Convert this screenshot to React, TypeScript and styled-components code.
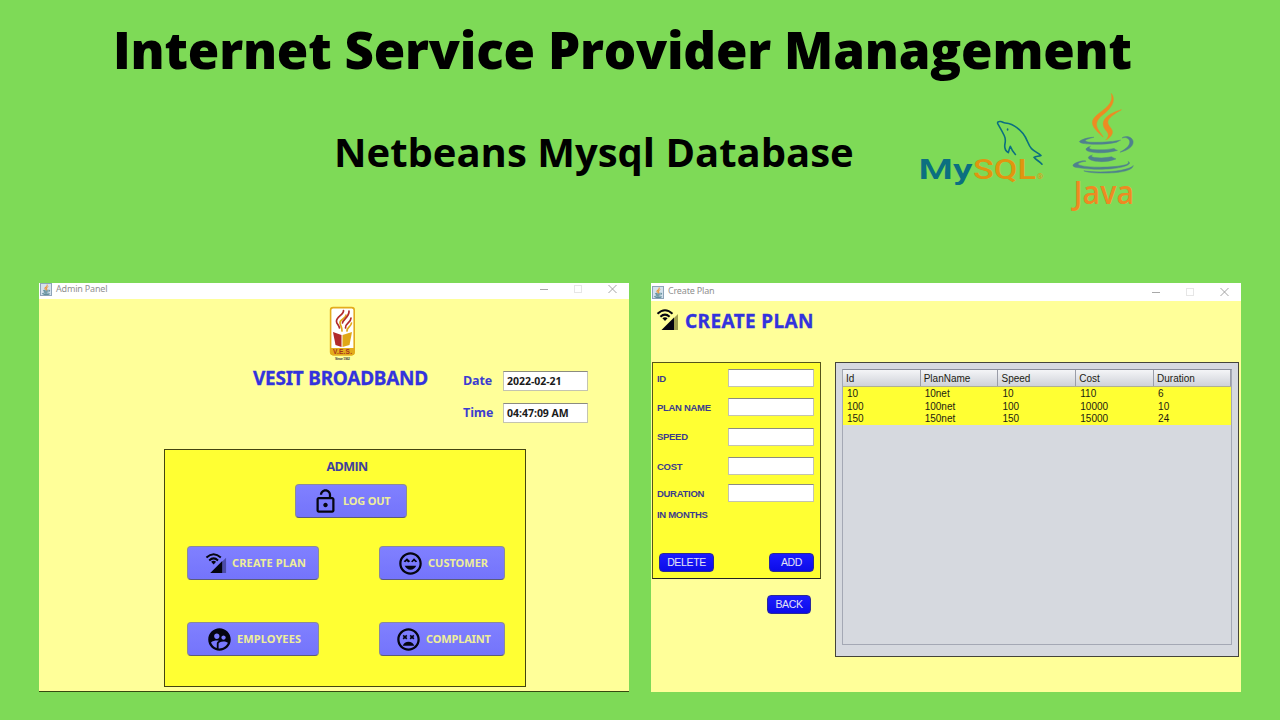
import React from "react";
import styled, { createGlobalStyle } from "styled-components";
import { MdOutlineLockOpen, MdSupervisedUserCircle } from "react-icons/md";

const GlobalStyle = createGlobalStyle`
  * { box-sizing: border-box; }
  body { margin: 0; background: #7eda57; overflow: hidden; }
`;

const Slide = styled.main`
  width: 1280px;
  height: 720px;
  background: #7eda57;
  display: flex;
  flex-direction: column;
`;

const Heading = styled.h1`
  margin: 0;
  padding: 13px 0 0 113px;
  height: 88px;
  font: 800 51px/72px "Open Sans", sans-serif;
  letter-spacing: -0.19px;
  color: #000;
  white-space: nowrap;
`;

const SubRow = styled.div`
  display: flex;
  align-items: flex-start;
  height: 195px;
  padding-left: 334px;
`;

const SubHeading = styled.h2`
  margin: 36px 0 0;
  width: 580px;
  font: 700 40px/56px "Open Sans", sans-serif;
  letter-spacing: 0;
  white-space: nowrap;
`;

const MysqlArt = styled.svg`
  width: 136px;
  height: 80px;
  margin-top: 27px;
`;

const JavaArt = styled.svg`
  width: 80px;
  height: 130px;
  margin: 2px 0 0 18px;
`;

const Windows = styled.div`
  display: flex;
  gap: 22px;
  padding-left: 39px;
`;

const Frame = styled.section<{ $base?: boolean }>`
  width: 590px;
  height: 409px;
  background: #ffff99;
  border-bottom: ${(p) => (p.$base ? "1px solid #35480f" : "0")};
  display: flex;
  flex-direction: column;
`;

const TitleBar = styled.header<{ $h: number; $pull: number }>`
  height: ${(p) => p.$h}px;
  flex: none;
  background: #fff;
  display: flex;
  align-items: center;
  padding: 0 ${(p) => p.$pull}px 0 1px;
  gap: 4px;
`;

const TitleText = styled.span<{ $dy: number }>`
  flex: 1;
  font: 400 9px/12px "Noto Sans", sans-serif;
  letter-spacing: -0.18px;
  color: #8f8f8f;
  margin-top: ${(p) => p.$dy}px;
`;

const Badge = styled.svg<{ $dy: number }>`
  width: 12px;
  height: 13px;
  margin-top: ${(p) => p.$dy}px;
`;

const Controls = styled.svg<{ $dy: number }>`
  width: 78px;
  height: 12px;
  margin-top: ${(p) => p.$dy}px;
`;

const AdminTop = styled.div`
  display: grid;
  grid-template-columns: 214px 210px 165px;
  height: 150px;
`;

const Brand = styled.div`
  grid-column: 2;
  display: flex;
  flex-direction: column;
  gap: 4px;
  padding-top: 7px;
`;

const VesArt = styled.svg`
  width: 27px;
  height: 55px;
  margin-left: 76px;
`;

const BlueTitle = styled.h3<{ $ls: number }>`
  margin: 0;
  font: 700 19px/26px "Noto Sans", sans-serif;
  letter-spacing: ${(p) => p.$ls}px;
  color: #3333dd;
  -webkit-text-stroke: 0.3px #3333dd;
  white-space: nowrap;
`;

const Clock = styled.div`
  display: grid;
  grid-template-columns: 40px 85px;
  grid-auto-rows: 20px;
  row-gap: 11.5px;
  padding-top: 72px;
`;

const ClockLabel = styled.span<{ $ls: number }>`
  font: 700 12.5px/19px "Open Sans", sans-serif;
  letter-spacing: ${(p) => p.$ls}px;
  color: #3c3cd0;
`;

const Field = styled.div<{ $h: number }>`
  height: ${(p) => p.$h}px;
  background: #fff;
  border: 1px solid #c4c4b0;
  border-top-color: #8b8b80;
`;

const ClockValue = styled(Field)`
  padding-left: 3px;
  font: 700 10.5px/19px "Open Sans", sans-serif;
  letter-spacing: -0.02px;
  color: #1a1a1a;
  white-space: nowrap;
`;

const AdminPanel = styled.div`
  width: 362px;
  height: 238px;
  margin-left: 125px;
  border: 1px solid #444410;
  background: #ffff33;
  padding: 8px 0 0;
`;

const PanelName = styled.div`
  text-align: center;
  margin-left: 4px;
  font: 700 12.5px/18px "Open Sans", sans-serif;
  letter-spacing: -0.6px;
  color: #40409c;
`;

const ButtonRow = styled.div<{ $top: number; $left: number }>`
  display: flex;
  gap: 60px;
  margin: ${(p) => p.$top}px 0 0 ${(p) => p.$left}px;
`;

const MenuButton = styled.button<{ $w: number; $pad: number }>`
  width: ${(p) => p.$w}px;
  height: 34px;
  padding: 0 0 0 ${(p) => p.$pad}px;
  display: flex;
  align-items: center;
  gap: 4px;
  border: 1px solid #8a8a9a;
  border-bottom-color: #5c5c78;
  border-radius: 4px;
  background: linear-gradient(#8080ff, #7474fb);
  font: 700 11px/16px "Noto Sans", sans-serif;
  color: #eeee99;
  white-space: nowrap;
  svg { color: #050510; flex: none; }
`;

const Caption = styled.span<{ $ls: number }>`
  letter-spacing: ${(p) => p.$ls}px;
`;

const PlanHead = styled.div`
  display: flex;
  align-items: flex-start;
  height: 61px;
  padding: 7px 0 0 5px;
  gap: 5px;
`;

const PlanBody = styled.div`
  display: grid;
  grid-template-columns: 169px 404px;
  column-gap: 14px;
  padding-left: 1px;
`;

const FormPanel = styled.div`
  height: 217px;
  border: 1px solid #55551a;
  border-bottom-color: #222;
  background: #ffff33;
  padding: 6px 6px 0 4px;
`;

const FormRow = styled.div<{ $gap: number }>`
  display: grid;
  grid-template-columns: 71px 86px;
  align-items: center;
  height: 18px;
  margin-bottom: ${(p) => p.$gap}px;
`;

const FormLabel = styled.label`
  font: 700 9.5px/13px "Liberation Sans", sans-serif;
  letter-spacing: -0.3px;
  color: #3c3c8c;
  white-space: nowrap;
`;

const Actions = styled.div`
  display: flex;
  justify-content: space-between;
  padding: 30px 0 0 2px;
`;

const SmallButton = styled.button<{ $w: number }>`
  width: ${(p) => p.$w}px;
  height: 19px;
  padding: 0;
  border: 1px solid #2a2a9a;
  border-radius: 4px;
  background: linear-gradient(#1c1cff, #0c0ce8);
  font: 400 10.5px/17px "Liberation Sans", sans-serif;
  letter-spacing: -0.35px;
  color: #e4e4f4;
`;

const BackRow = styled.div`
  display: flex;
  justify-content: flex-end;
  padding: 16px 10px 0 0;
`;

const TablePanel = styled.div`
  height: 295px;
  border: 1px solid #44443a;
  background: #d6d9df;
  padding: 6px;
`;

const TableBox = styled.div`
  height: 276px;
  width: 390px;
  border: 1px solid #a4a8b4;
  border-top-color: #888c98;
`;

const TableRow = styled.div<{ $head?: boolean }>`
  display: grid;
  grid-template-columns: 77.700px 77.800px 77.800px 77.800px 76.900px;
  height: ${(p) => (p.$head ? 17 : 12.5)}px;
  font: 400 10px/${(p) => (p.$head ? 18 : 14)}px "Liberation Sans", sans-serif;
  color: #1c1c12;
  background: ${(p) => (p.$head ? "linear-gradient(#f4f5f7, #cfd2d9)" : "#ffff33")};
  border-bottom: ${(p) => (p.$head ? "1px solid #b0b090" : "0")};
`;

const Cell = styled.span<{ $head?: boolean }>`
  height: ${(p) => (p.$head ? "16px" : "auto")};
  padding-left: ${(p) => (p.$head ? 3 : 4)}px;
  border-right: 1px solid ${(p) => (p.$head ? "#9a9da8" : "transparent")};
`;

const CUP_BLUE = [
  "M277.74 312.9c9.8-6.7 23.4-12.5 23.4-12.5s-38.7 7-77.2 10.2c-47.1 3.9-97.7 4.7-123.1 1.3-60.1-8 33-30.1 33-30.1s-36.1-2.4-80.6 19c-52.5 25.4 130 37 224.5 12.1z",
  "M300.9 375.1a12.19 12.19 0 0 1-2 2.6c128.3-33.7 81.1-118.9 19.8-97.3a17.33 17.33 0 0 0-8.2 6.3 70.45 70.45 0 0 1 11-3c31-6.5 75.5 41.5-20.6 91.4z",
  "M348 437.4s14.5 11.9-15.9 21.2c-57.9 17.5-240.8 22.8-291.6.7-18.3-7.9 16-19 26.8-21.3 11.2-2.4 17.7-2 17.7-2-20.3-14.3-131.3 28.1-56.4 40.2C232.84 509.4 401 461.3 348 437.4z",
  "M124.44 396c-78.7 22 47.9 67.4 148.1 24.5a185.89 185.89 0 0 1-28.2-13.8c-44.7 8.5-65.4 9.1-106 4.5-33.5-3.8-13.9-15.2-13.9-15.2z",
  "M304.24 493.2c-78.7 14.8-175.8 13.1-233.3 3.6 0-.1 11.8 9.7 72.4 13.6 92.2 5.9 233.8-3.3 237.1-46.9 0 0-6.4 16.5-76.2 29.7z",
  "M260.64 353c-59.2 11.4-93.5 11.1-136.8 6.6-33.5-3.5-11.6-19.7-11.6-19.7-86.8 28.8 48.2 61.4 169.5 25.9a60.37 60.37 0 0 1-21.1-12.8z",
];
const STEAM = [
  "M192.34 280.8c-19-42.7-83.1-80.2 0-145.8C296 53.2 242.84 0 242.84 0c21.5 84.5-75.6 110.1-110.7 162.6-23.9 35.9 11.7 74.4 60.2 118.2z",
  "M306.94 104.6c.1 0-175.2 43.8-91.5 140.2 24.7 28.4-6.5 54-6.5 54s62.7-32.4 33.9-72.9c-26.9-37.8-47.5-56.6 64.1-121.3z",
];

function Cup({ bold = 0 }: { bold?: number }) {
  return (
    <>
      {CUP_BLUE.map((d) => <path key={d} d={d} fill="#4f818d" stroke="#4f818d" strokeWidth={bold} />)}
      {STEAM.map((d) => <path key={d} d={d} fill="#ee8a22" stroke="#ee8a22" strokeWidth={bold} />)}
    </>
  );
}

function JavaLogo() {
  return (
    <JavaArt viewBox="1068 90 80 130">
      <g transform="translate(1072.5 93.5) scale(.1595 .1555)"><Cup bold={3} /></g>
      <text x="1073.500" y="203.800" fontFamily="Open Sans, sans-serif" fontWeight="600" fontSize="32" fill="#ee8a22" textLength="60.500" lengthAdjust="spacingAndGlyphs">Java</text>
    </JavaArt>
  );
}

function MysqlLogo() {
  return (
    <MysqlArt viewBox="914 115 136 80">
      <path
        fill="none"
        stroke="#0b6f80"
        strokeWidth="1.600"
        strokeLinejoin="round"
        strokeLinecap="round"
        d="M1015.400 154.500C1013.500 152.500 1011.500 149.500 1010.300 146.300C1009.300 148 1009.100 150.500 1008.300 152.600C1005.500 151 1004.200 147.500 1005 143.500C1005.600 140.500 1005.700 138.500 1004.200 135.500C1002.200 131.500 1000.200 128 998 124.200C996.800 122 998.600 121.200 1000.600 121.500C1002.600 121.800 1003.400 123 1005.300 123C1012 123.600 1018.500 128 1023 133.500C1027.500 139 1028 145 1031.500 148.600C1034.500 151.800 1038.500 152.800 1041 155.500C1038.500 156.500 1036 156 1034 157.300C1036 160 1039.500 161.300 1042 164.200"
      />
      <ellipse cx="1007.600" cy="129.500" rx=".8" ry="1.200" fill="#0b6f80" />
      <g fontFamily="Roboto, sans-serif" fontSize="27">
        <text x="918.500" y="178.800" fontWeight="600" fill="#0b6f80" textLength="54" lengthAdjust="spacingAndGlyphs">My</text>
        <text x="973" y="178.800" fontWeight="500" fill="#e0950f" textLength="63" lengthAdjust="spacingAndGlyphs">SQL</text>
        <text x="1037" y="178.800" fontSize="8" fill="#e0950f">®</text>
      </g>
    </MysqlArt>
  );
}

function JavaBadge({ dy }: { dy: number }) {
  return (
    <Badge $dy={dy} viewBox="0 0 12 13">
      <rect x=".5" y=".5" width="11" height="12" fill="#d5e2ee" stroke="#8ea4b8" />
      <g transform="translate(2.200 1.500) scale(.02)"><Cup bold={20} /></g>
    </Badge>
  );
}

function WindowControls({ dy }: { dy: number }) {
  return (
    <Controls $dy={dy} viewBox="0 0 78 12" fill="none">
      <path d="M1 6.500H9" stroke="#a8a8a8" />
      <rect x="35.500" y="2.500" width="7" height="7" stroke="#e6e6e6" />
      <path d="M69.500 2L77.500 10M77.500 2L69.500 10" stroke="#999" strokeWidth=".9" />
    </Controls>
  );
}

function CellWifi({ size, fade }: { size: number; fade: string }) {
  return (
    <svg width={size} height={size} viewBox="0 0 24 24">
      <path d="M18 9.980L22 6V22H18z" fill={fade} />
      <path d="M18 9.500V22H5.500z" fill="#050510" />
      <g fill="none" stroke="#050510" strokeWidth="2">
        <path d="M1.500 5.800Q9 -1.300 16.500 5.800" />
        <path d="M4.400 8.800Q9 4.500 13.600 8.800" />
      </g>
      <path d="M6.400 10.300Q9 8 11.600 10.300L9 13z" fill="#050510" />
    </svg>
  );
}

const FACE_RING =
  "M11.990 2C6.470 2 2 6.470 2 12s4.470 10 9.990 10S22 17.530 22 12 17.520 2 11.990 2zM12 20c-4.420 0-8-3.580-8-8s3.580-8 8-8 8 3.580 8 8-3.580 8-8 8z";

function HappyFace() {
  return (
    <svg width="27" height="27" viewBox="0 0 24 24" fill="currentColor">
      <path d={FACE_RING} />
      <path d="M8.880 9.940 7.820 8.880 6.760 9.940 5.950 9.940 8.880 7.300 11.800 9.940 11 9.940 9.940 11 8.880 9.940M6 10.200 8.880 7.300 11.500 10.200 10.300 10.900 8.880 9.500 7.400 10.900zM12.500 10.200 15.120 7.300 18 10.200 16.600 10.900 15.120 9.500 13.700 10.900z" />
      <path d="M12 17.500c2.330 0 4.310-1.460 5.110-3.500H6.890c.8 2.040 2.780 3.500 5.110 3.500z" />
    </svg>
  );
}

function SadFace() {
  return (
    <svg width="27" height="27" viewBox="0 0 24 24" fill="currentColor">
      <path d={FACE_RING} />
      <path d="M16.180 7.760l-1.060 1.060-1.060-1.060L13 8.820l1.060 1.060L13 10.940 14.060 12l1.060-1.060L16.180 12l1.060-1.060-1.060-1.060 1.060-1.060zM7.820 12l1.060-1.060L9.940 12 11 10.940 9.940 9.880 11 8.820 9.940 7.760 8.880 8.820 7.820 7.760 6.760 8.820l1.060 1.060-1.060 1.060z" />
      <path d="M12 14c-2.330 0-4.310 1.460-5.110 3.500h10.220c-.8-2.040-2.780-3.500-5.110-3.500z" />
    </svg>
  );
}

function VesLogo() {
  return (
    <VesArt viewBox="0 0 27 55">
      <rect x="1.600" y="1.600" width="23.600" height="47" rx="2.500" fill="#fff" stroke="#e3ac1c" strokeWidth="1.600" />
      <path d="M1.500 42H25.500V47Q25.500 49.400 23 49.400H4Q1.500 49.400 1.500 47Z" fill="#e3ac1c" />
      <path d="M4 26L12.500 29V41L6.500 39Z" fill="#b12a2a" />
      <path d="M23 26L13.500 29V41L20.500 39Z" fill="#e0a818" />
      <g fill="none" strokeWidth="1.700" strokeLinecap="round">
        <path d="M14.500 4.500C15 9 7 10.500 7.500 15.500C7.500 18 10 19 10.500 22" stroke="#b12a2a" />
        <path d="M17 9C17 13 10.500 13 11 17C11.200 19.500 13 20.500 13 25" stroke="#e0a818" />
        <path d="M20 5C20.500 11 14 13 13.500 17" stroke="#b12a2a" />
        <path d="M22 12C22 17 16 17 16.500 22" stroke="#b12a2a" />
        <path d="M22.500 17C22 21 18 21 18 25" stroke="#e0a818" />
      </g>
      <text x="4" y="48" fontFamily="Liberation Sans, sans-serif" fontWeight="700" fontSize="6.500" fill="#a3321c" textLength="19">V.E.S.</text>
      <text x="6" y="53.500" fontFamily="Liberation Sans, sans-serif" fontWeight="700" fontSize="3.400" fill="#444" textLength="15">Since 1962</text>
    </VesArt>
  );
}

const FORM = [
  { label: "ID", gap: 11.4 },
  { label: "PLAN NAME", gap: 11.4 },
  { label: "SPEED", gap: 11.4 },
  { label: "COST", gap: 9.3 },
  { label: "DURATION", gap: 3 },
];

const HEADINGS = ["Id", "PlanName", "Speed", "Cost", "Duration"];

const PLANS = [
  ["10", "10net", "10", "110", "6"],
  ["100", "100net", "100", "10000", "10"],
  ["150", "150net", "150", "15000", "24"],
];

export default function App() {
  return (
    <Slide>
      <GlobalStyle />
      <Heading>Internet Service Provider Management</Heading>
      <SubRow>
        <SubHeading>Netbeans Mysql Database</SubHeading>
        <MysqlLogo />
        <JavaLogo />
      </SubRow>
      <Windows>
        <Frame $base>
          <TitleBar $h={16} $pull={12}>
            <JavaBadge dy={-4} />
            <TitleText $dy={-5}>Admin Panel</TitleText>
            <WindowControls dy={-4} />
          </TitleBar>
          <AdminTop>
            <Brand>
              <VesLogo />
              <BlueTitle $ls={-0.25}>VESIT BROADBAND</BlueTitle>
            </Brand>
            <Clock>
              <ClockLabel $ls={-0.15}>Date</ClockLabel>
              <ClockValue $h={20}>2022-02-21</ClockValue>
              <ClockLabel $ls={-0.1}>Time</ClockLabel>
              <ClockValue $h={20}>04:47:09 AM</ClockValue>
            </Clock>
          </AdminTop>
          <AdminPanel>
            <PanelName>ADMIN</PanelName>
            <ButtonRow $top={8} $left={130}>
              <MenuButton $w={112} $pad={16}>
                <MdOutlineLockOpen size={27} />
                <Caption $ls={-0.2}>LOG OUT</Caption>
              </MenuButton>
            </ButtonRow>
            <ButtonRow $top={28} $left={22}>
              <MenuButton $w={132} $pad={17}>
                <CellWifi size={23} fade="#4c4ca8" />
                <Caption $ls={0.17}>CREATE PLAN</Caption>
              </MenuButton>
              <MenuButton $w={126} $pad={17}>
                <HappyFace />
                <Caption $ls={0}>CUSTOMER</Caption>
              </MenuButton>
            </ButtonRow>
            <ButtonRow $top={42} $left={22}>
              <MenuButton $w={132} $pad={18}>
                <MdSupervisedUserCircle size={27} />
                <Caption $ls={0.1}>EMPLOYEES</Caption>
              </MenuButton>
              <MenuButton $w={126} $pad={15}>
                <SadFace />
                <Caption $ls={-0.15}>COMPLAINT</Caption>
              </MenuButton>
            </ButtonRow>
          </AdminPanel>
        </Frame>
        <Frame>
          <TitleBar $h={18} $pull={12}>
            <JavaBadge dy={0} />
            <TitleText $dy={-2}>Create Plan</TitleText>
            <WindowControls dy={-1} />
          </TitleBar>
          <PlanHead>
            <CellWifi size={24} fade="#a0a050" />
            <BlueTitle $ls={0.38}>CREATE PLAN</BlueTitle>
          </PlanHead>
          <PlanBody>
            <div>
              <FormPanel>
                {FORM.map((f) => (
                  <FormRow key={f.label} $gap={f.gap}>
                    <FormLabel>{f.label}</FormLabel>
                    <Field $h={18} />
                  </FormRow>
                ))}
                <FormRow $gap={0}>
                  <FormLabel>IN MONTHS</FormLabel>
                </FormRow>
                <Actions>
                  <SmallButton $w={55}>DELETE</SmallButton>
                  <SmallButton $w={45}>ADD</SmallButton>
                </Actions>
              </FormPanel>
              <BackRow>
                <SmallButton $w={44}>BACK</SmallButton>
              </BackRow>
            </div>
            <TablePanel>
              <TableBox>
                <TableRow $head>
                  {HEADINGS.map((h) => (
                    <Cell key={h} $head>{h}</Cell>
                  ))}
                </TableRow>
                {PLANS.map((row) => (
                  <TableRow key={row[0]}>
                    {row.map((value, i) => <Cell key={i}>{value}</Cell>)}
                  </TableRow>
                ))}
              </TableBox>
            </TablePanel>
          </PlanBody>
        </Frame>
      </Windows>
    </Slide>
  );
}
